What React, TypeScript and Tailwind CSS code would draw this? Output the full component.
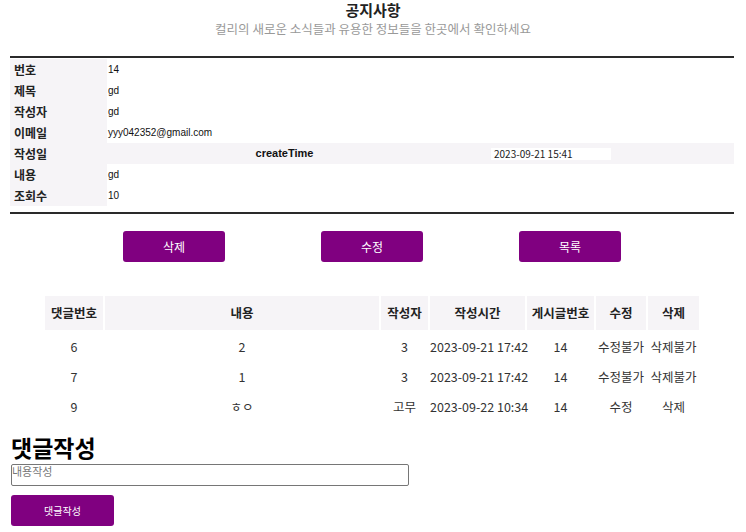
const info: [string, string][] = [
  ['번호', '14'],
  ['제목', 'gd'],
  ['작성자', 'gd'],
  ['이메일', 'yyy042352@gmail.com'],
];

const info2: [string, string][] = [
  ['내용', 'gd'],
  ['조회수', '10'],
];

const comments = [
  { no: '6', body: '2', writer: '3', time: '2023-09-21 17:42', post: '14', edit: '수정불가', del: '삭제불가' },
  { no: '7', body: '1', writer: '3', time: '2023-09-21 17:42', post: '14', edit: '수정불가', del: '삭제불가' },
  { no: '9', body: 'ㅎㅇ', writer: '고무', time: '2023-09-22 10:34', post: '14', edit: '수정', del: '삭제' },
];

const heads = ['댓글번호', '내용', '작성자', '작성시간', '게시글번호', '수정', '삭제'];

const kr = "font-['Noto_Sans_CJK_KR',sans-serif]";
const lat = "font-['Liberation_Sans','Noto_Sans_CJK_KR',sans-serif]";

function InfoRow({ label, value }: { label: string; value: string }) {
  return (
    <div className="flex h-[21px] items-center">
      <div className={`w-[97px] h-full bg-[#f6f4f7] pl-[4px] flex items-center text-[12px] font-bold text-[#222] ${kr}`}>{label}</div>
      <div className={`pl-[1px] text-[10px] text-[#111] ${lat}`}>{value}</div>
    </div>
  );
}

export default function App() {
  return (
    <div className={`w-[746px] h-[532px] bg-white overflow-hidden ${kr}`}>
      <div className="text-center pt-[1px]">
        <h1 className="text-[15px] font-bold text-[#222] leading-[17px]">공지사항</h1>
        <p className="text-[12.5px] text-[#999] mt-[2px] leading-[18px]">컬리의 새로운 소식들과 유용한 정보들을 한곳에서 확인하세요</p>
      </div>

      <div className="mx-[10px] mt-[18px] w-[724px] border-t-2 border-b-2 border-[#2a2a2a] pt-[1px] pb-[6px]">
        {info.map(([l, v]) => (
          <InfoRow key={l} label={l} value={v} />
        ))}
        <div className="flex h-[21px] items-center bg-[#f6f4f7]">
          <div className="w-[97px] pl-[4px] text-[12px] font-bold text-[#222]">작성일</div>
          <div className={`w-[355px] text-center text-[11px] font-bold text-[#111] ${lat}`}>createTime</div>
          <div className="ml-[29px] w-[120px] h-[12px] bg-white flex items-center pl-[3px] text-[10px] text-[#222]">2023-09-21 15:41</div>
        </div>
        {info2.map(([l, v]) => (
          <InfoRow key={l} label={l} value={v} />
        ))}
      </div>

      <div className="flex mt-[17px] pl-[123px] gap-[96px]">
        {['삭제', '수정', '목록'].map((b) => (
          <button key={b} className="w-[102px] h-[31px] bg-[#800080] rounded-[3px] text-white text-[12px]">
            {b}
          </button>
        ))}
      </div>

      <div className="ml-[45px] mt-[34px] w-[654px]">
        <div className="grid grid-cols-[58px_274px_47px_95px_67px_50px_51px] gap-x-[2px]">
          {heads.map((h) => (
            <div key={h} className="h-[34px] bg-[#f6f4f7] flex items-center justify-center text-[12.5px] font-bold text-[#222]">
              {h}
            </div>
          ))}
        </div>
        <div className="mt-[2px]">
          {comments.map((c) => (
            <div key={c.no} className="grid grid-cols-[58px_274px_47px_95px_67px_50px_51px] gap-x-[2px] h-[30px] items-center text-center text-[12.5px] text-[#333]">
              <div>{c.no}</div>
              <div>{c.body}</div>
              <div>{c.writer}</div>
              <div className="whitespace-nowrap">{c.time}</div>
              <div>{c.post}</div>
              <div className="whitespace-nowrap">{c.edit}</div>
              <div className="whitespace-nowrap">{c.del}</div>
            </div>
          ))}
        </div>
      </div>

      <div className="pl-[11px] mt-[12px]">
        <h2 className="text-[23px] font-bold text-black leading-[26px]">댓글작성</h2>
        <textarea
          placeholder="내용작성"
          className="block mt-[4px] w-[398px] h-[22px] border border-[#767676] rounded-[2px] p-0 text-[11px] leading-[12px] resize-none placeholder:text-[#777] outline-none"
        />
        <button className="mt-[9px] w-[103px] h-[31px] bg-[#800080] rounded-[3px] text-white text-[10px]">댓글작성</button>
      </div>
    </div>
  );
}
